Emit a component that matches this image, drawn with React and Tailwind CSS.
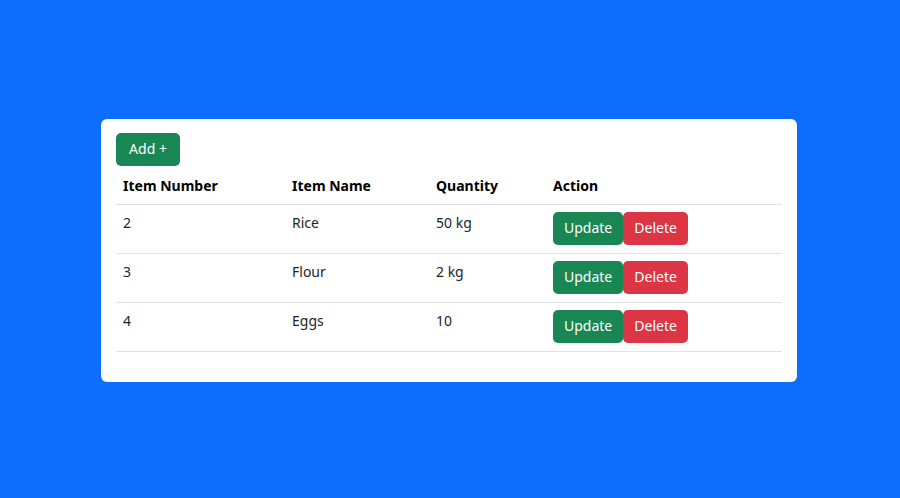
const items = [
  { id: 2, name: 'Rice', qty: '50 kg' },
  { id: 3, name: 'Flour', qty: '2 kg' },
  { id: 4, name: 'Eggs', qty: '10' },
];

export default function App() {
  return (
    <div
      className="flex h-[498px] w-full items-center justify-center bg-[#0d6efd] pt-[2px] pr-[2px]"
      style={{ fontFamily: '"Noto Sans", "Open Sans", sans-serif' }}
    >
      <div className="w-[696px] rounded-[6px] bg-white px-[15px] pt-[14px] pb-[15px] text-[14px] text-[#212529]">
        <button className="h-[33px] w-[64px] rounded-[5px] bg-[#198754] leading-[22px] text-white">
          Add +
        </button>
        <table className="mb-[15px] w-full border-collapse text-left align-top">
          <thead>
            <tr className="border-b border-[#dee2e6]">
              <th className="w-[169px] px-[7px] pt-[9px] pb-[7px] font-bold leading-[22px] text-black">Item Number</th>
              <th className="w-[144px] px-[7px] pt-[9px] pb-[7px] font-bold leading-[22px] text-black">Item Name</th>
              <th className="w-[117px] px-[7px] pt-[9px] pb-[7px] font-bold leading-[22px] text-black">Quantity</th>
              <th className="px-[7px] pt-[9px] pb-[7px] font-bold leading-[22px] text-black">Action</th>
            </tr>
          </thead>
          <tbody>
            {items.map((it) => (
              <tr key={it.id} className="border-b border-[#dee2e6]">
                <td className="px-[7px] pt-[7px] pb-[8px] align-top leading-[22px]">{it.id}</td>
                <td className="px-[7px] pt-[7px] pb-[8px] align-top leading-[22px]">{it.name}</td>
                <td className="px-[7px] pt-[7px] pb-[8px] align-top leading-[22px]">{it.qty}</td>
                <td className="px-[7px] pt-[7px] pb-[8px] align-top">
                  <div className="flex">
                    <button className="h-[33px] rounded-[5px] bg-[#198754] px-[11px] leading-[22px] text-white">
                      Update
                    </button>
                    <button className="h-[33px] rounded-[5px] bg-[#dc3545] px-[11px] leading-[22px] text-white">
                      Delete
                    </button>
                  </div>
                </td>
              </tr>
            ))}
          </tbody>
        </table>
      </div>
    </div>
  );
}
